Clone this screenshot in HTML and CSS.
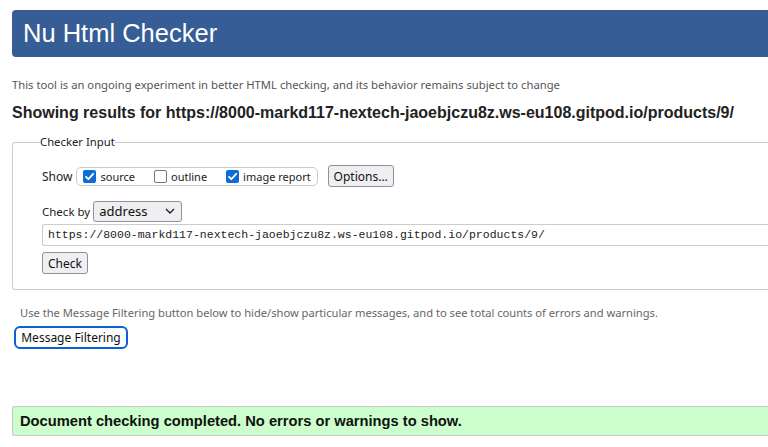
FILE: index.html
```html
<!DOCTYPE html>
<html>
<head>
<meta charset="utf-8">
<title>Nu Html Checker</title>
<link rel="stylesheet" href="styles.css">
</head>
<body>
<div class="page">
  <h1 class="banner">Nu Html Checker</h1>
  <p class="intro">This tool is an ongoing experiment in better HTML checking, and its behavior remains subject to change</p>
  <p class="showing">Showing results for https://8000-markd117-nextech-jaoebjczu8z.ws-eu108.gitpod.io/products/9/</p>
  <fieldset class="checker">
    <legend class="legend">Checker Input</legend>
    <div class="row show-row">
      <span class="label">Show</span>
      <span class="group">
        <span class="opt"><span class="cb on"><svg viewBox="0 0 13 13" width="13" height="13"><path d="M3 6.8 L5.4 9.2 L10.2 3.8" fill="none" stroke="#fff" stroke-width="1.8" stroke-linecap="round" stroke-linejoin="round"/></svg></span>source</span>
        <span class="opt"><span class="cb"></span>outline</span>
        <span class="opt"><span class="cb on"><svg viewBox="0 0 13 13" width="13" height="13"><path d="M3 6.8 L5.4 9.2 L10.2 3.8" fill="none" stroke="#fff" stroke-width="1.8" stroke-linecap="round" stroke-linejoin="round"/></svg></span>image report</span>
      </span>
      <span class="btn options">Options...</span>
    </div>
    <div class="row by-row">
      <span class="label">Check by</span>
      <span class="select">address<svg class="chev" viewBox="0 0 10 6" width="10" height="6"><path d="M1 1 L5 5 L9 1" fill="none" stroke="#222" stroke-width="1.4"/></svg></span>
    </div>
    <div class="url">https://8000-markd117-nextech-jaoebjczu8z.ws-eu108.gitpod.io/products/9/</div>
    <span class="btn check">Check</span>
  </fieldset>
  <p class="filter-note">Use the Message Filtering button below to hide/show particular messages, and to see total counts of errors and warnings.</p>
  <span class="btn filter">Message Filtering</span>
  <div class="success">Document checking completed. No errors or warnings to show.</div>
</div>
</body>
</html>
```

FILE: styles.css
```css
html, body {
  margin: 0;
  padding: 0;
  overflow: hidden;
  background: #fff;
}
.page {
  padding: 10px 0 0 12px;
  width: 900px;
  font-family: "Liberation Sans", Arial, sans-serif;
  color: #111;
}
.banner {
  margin: 0;
  height: 47px;
  line-height: 47px;
  padding-left: 11px;
  background: #365d95;
  color: #fff;
  font-weight: normal;
  font-size: 25.5px;
  border-radius: 4px 0 0 4px;
}
.intro {
  margin: 20px 0 0 0;
  font-family: "Noto Sans", sans-serif;
  font-size: 11.25px;
  line-height: 16px;
  color: #555;
}
.showing {
  margin: 10px 0 0 0;
  font-weight: bold;
  font-size: 16px;
  line-height: 20px;
  color: #222;
}
.checker {
  margin: 12px 0 0 0;
  padding: 0 0 15px 29px;
  border: 1px solid #ccc;
  border-radius: 3px;
  font-family: "Noto Sans", sans-serif;
  font-size: 12px;
  color: #222;
}
.legend {
  padding: 0;
  margin-left: -2px;
  font-size: 11.3px;
  line-height: 14px;
}
.row {
  display: flex;
  align-items: center;
}
.show-row {
  margin-top: 16px;
  height: 22px;
}
.label {
  margin-right: 4px;
  font-size: 12px;
}
.group {
  display: flex;
  align-items: center;
  height: 17px;
  padding: 0 6px;
  border: 1px solid #ccc;
  border-radius: 5px;
  gap: 19px;
}
.opt {
  display: flex;
  align-items: center;
  gap: 4px;
  font-size: 11px;
}
.cb {
  display: inline-block;
  box-sizing: border-box;
  width: 13px;
  height: 13px;
  border: 1.5px solid #767676;
  border-radius: 2px;
  background: #fff;
}
.cb.on {
  border: none;
  background: #0f6cd6;
}
.cb svg { display: block; }
.btn {
  display: inline-flex;
  align-items: center;
  justify-content: center;
  box-sizing: border-box;
  background: #efeff2;
  border: 1px solid #8f8f9d;
  border-radius: 3px;
  font-family: "Noto Sans", sans-serif;
  font-size: 12px;
  color: #111;
}
.options {
  margin-left: 10px;
  width: 66px;
  height: 22px;
}
.by-row {
  margin-top: 13px;
  height: 22px;
}
.by-row .label {
  margin-right: 3px;
  font-size: 11.5px;
}
.select {
  display: inline-flex;
  align-items: center;
  justify-content: space-between;
  box-sizing: border-box;
  width: 89px;
  height: 21px;
  padding: 0 6px 0 5px;
  background: #efeff2;
  border: 1px solid #8f8f9d;
  border-radius: 3px;
  font-size: 13px;
  color: #111;
}
.url {
  margin-top: 2px;
  box-sizing: border-box;
  height: 22px;
  line-height: 20px;
  padding-left: 5px;
  border: 1px solid #ccc;
  border-radius: 3px 0 0 3px;
  border-right: none;
  font-family: "Liberation Mono", monospace;
  font-size: 11.5px;
  color: #222;
}
.check {
  margin-top: 6px;
  width: 46px;
  height: 22px;
}
.filter-note {
  margin: 16px 0 0 8px;
  font-family: "Noto Sans", sans-serif;
  font-size: 11.15px;
  line-height: 14px;
  color: #666;
}
.filter {
  margin: 6px 0 0 2px;
  width: 114px;
  height: 23px;
  border: 2px solid #0c5fd4;
  border-radius: 6px;
  background: #fff;
}
.success {
  margin-top: 57px;
  box-sizing: border-box;
  height: 30px;
  line-height: 28px;
  padding-left: 7px;
  border: 1px solid #c8c8c8;
  border-right: none;
  border-radius: 3px 0 0 3px;
  background: #ccffcc;
  font-weight: bold;
  font-size: 14.7px;
  color: #111;
}
```
